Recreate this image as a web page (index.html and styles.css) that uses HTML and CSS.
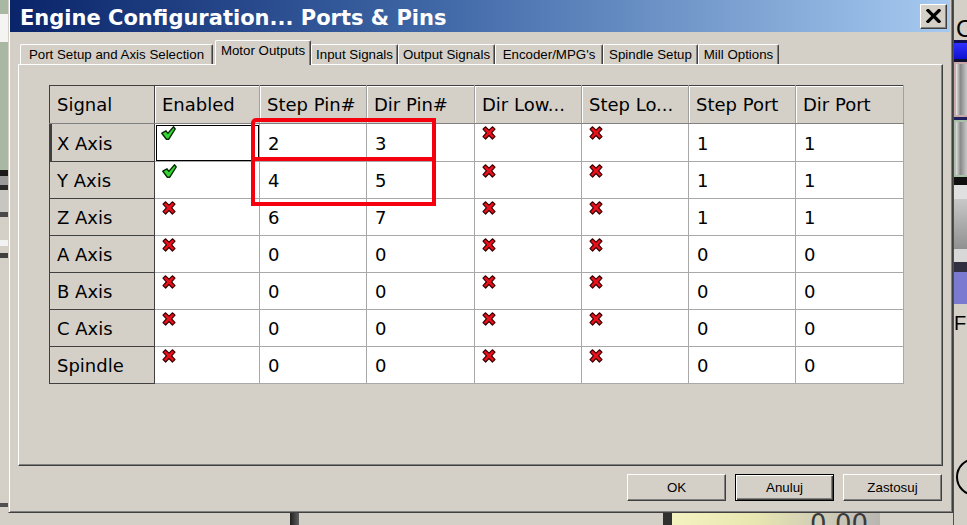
FILE: index.html
```html
<!DOCTYPE html>
<html>
<head>
<meta charset="utf-8">
<title>Engine Configuration... Ports &amp; Pins</title>
<link rel="stylesheet" href="styles.css">
</head>
<body>
<svg class="defs" width="0" height="0">
  <symbol id="chk" viewBox="0 0 15 14">
    <path d="M0.8 7.2 L5 4.8 L6.8 7.4 L12.6 0.8 L14.2 3 L7.8 13.2 L5.4 13.2 Z" fill="#33d633" stroke="#082808" stroke-width="1.4" stroke-linejoin="round"/>
  </symbol>
  <symbol id="crs" viewBox="0 0 14 14">
    <path d="M1 3.2 L3.6 0.8 L7 4.2 L10.4 0.8 L13 3.2 L9.6 6.8 L13 10.6 L10.4 13 L7 9.5 L3.6 13 L1 10.6 L4.4 6.8 Z" fill="#e8101c" stroke="#3a0000" stroke-width="1.2" stroke-linejoin="round"/>
  </symbol>
</svg>
<div class="desktop">
  <div class="left-strip">
    <div class="ls-a"></div>
    <div class="ls-b"></div>
    <div class="ls-c"></div>
    <div class="ls-d"></div>
    <div class="ls-e"></div>
    <div class="ls-f"></div>
    <div class="ls-g"></div>
    <div class="ls-h"></div>
    <div class="ls-i"></div>
    <div class="ls-j"></div>
    <div class="ls-k"></div>
    <div class="ls-l"></div>
    <div class="ls-m"></div>
    <div class="ls-n"></div>
    <div class="ls-o"></div>
  </div>
  <div class="center">
    <div class="dialog">
      <div class="titlebar">
        <span class="title">Engine Configuration... Ports &amp; Pins</span>
        <button class="close" aria-label="Close">
          <svg width="15" height="14" viewBox="0 0 15 14"><path d="M2 1.5 L13 12.5 M13 1.5 L2 12.5" stroke="#000" stroke-width="3.2" stroke-linecap="square"/></svg>
        </button>
      </div>
      <div class="body">
        <div class="tabs">
          <div class="tab t1">Port Setup and Axis Selection</div>
          <div class="tab t2 active">Motor Outputs</div>
          <div class="tab t3">Input Signals</div>
          <div class="tab t4">Output Signals</div>
          <div class="tab t5">Encoder/MPG's</div>
          <div class="tab t6">Spindle Setup</div>
          <div class="tab t7">Mill Options</div>
        </div>
        <div class="panel">
          <div class="table-wrap">
            <table class="grid">
              <colgroup>
                <col class="c-sig"><col class="c-en"><col class="c-sp"><col class="c-dp">
                <col class="c-dl"><col class="c-sl"><col class="c-spo"><col class="c-dpo">
              </colgroup>
              <thead>
                <tr>
                  <th class="first">Signal</th>
                  <th>Enabled</th>
                  <th>Step Pin#</th>
                  <th>Dir Pin#</th>
                  <th>Dir Low...</th>
                  <th>Step Lo...</th>
                  <th>Step Port</th>
                  <th>Dir Port</th>
                </tr>
              </thead>
              <tbody>
                <tr class="r-first">
                  <td class="lbl cur">X Axis</td>
                  <td class="ic focus"><svg class="i-chk"><use href="#chk"/></svg></td>
                  <td>2</td><td>3</td>
                  <td class="ic"><svg class="i-crs"><use href="#crs"/></svg></td>
                  <td class="ic"><svg class="i-crs"><use href="#crs"/></svg></td>
                  <td>1</td><td>1</td>
                </tr>
                <tr>
                  <td class="lbl">Y Axis</td>
                  <td class="ic"><svg class="i-chk"><use href="#chk"/></svg></td>
                  <td>4</td><td>5</td>
                  <td class="ic"><svg class="i-crs"><use href="#crs"/></svg></td>
                  <td class="ic"><svg class="i-crs"><use href="#crs"/></svg></td>
                  <td>1</td><td>1</td>
                </tr>
                <tr>
                  <td class="lbl">Z Axis</td>
                  <td class="ic"><svg class="i-crs"><use href="#crs"/></svg></td>
                  <td>6</td><td>7</td>
                  <td class="ic"><svg class="i-crs"><use href="#crs"/></svg></td>
                  <td class="ic"><svg class="i-crs"><use href="#crs"/></svg></td>
                  <td>1</td><td>1</td>
                </tr>
                <tr>
                  <td class="lbl">A Axis</td>
                  <td class="ic"><svg class="i-crs"><use href="#crs"/></svg></td>
                  <td>0</td><td>0</td>
                  <td class="ic"><svg class="i-crs"><use href="#crs"/></svg></td>
                  <td class="ic"><svg class="i-crs"><use href="#crs"/></svg></td>
                  <td>0</td><td>0</td>
                </tr>
                <tr>
                  <td class="lbl">B Axis</td>
                  <td class="ic"><svg class="i-crs"><use href="#crs"/></svg></td>
                  <td>0</td><td>0</td>
                  <td class="ic"><svg class="i-crs"><use href="#crs"/></svg></td>
                  <td class="ic"><svg class="i-crs"><use href="#crs"/></svg></td>
                  <td>0</td><td>0</td>
                </tr>
                <tr>
                  <td class="lbl">C Axis</td>
                  <td class="ic"><svg class="i-crs"><use href="#crs"/></svg></td>
                  <td>0</td><td>0</td>
                  <td class="ic"><svg class="i-crs"><use href="#crs"/></svg></td>
                  <td class="ic"><svg class="i-crs"><use href="#crs"/></svg></td>
                  <td>0</td><td>0</td>
                </tr>
                <tr>
                  <td class="lbl">Spindle</td>
                  <td class="ic"><svg class="i-crs"><use href="#crs"/></svg></td>
                  <td>0</td><td>0</td>
                  <td class="ic"><svg class="i-crs"><use href="#crs"/></svg></td>
                  <td class="ic"><svg class="i-crs"><use href="#crs"/></svg></td>
                  <td>0</td><td>0</td>
                </tr>
              </tbody>
            </table>
            <div class="annot box-a"></div>
            <div class="annot box-b"></div>
          </div>
        </div>
        <div class="buttons">
          <button class="btn">OK</button>
          <button class="btn default">Anuluj</button>
          <button class="btn">Zastosuj</button>
        </div>
      </div>
    </div>
    <div class="below">
      <div class="bl-gap1"></div>
      <div class="bl-dark"></div>
      <div class="bl-gap2"></div>
      <div class="bl-edge"></div>
      <div class="bl-bar"><span class="bl-num">0.00</span></div>
      <div class="bl-rest"></div>
    </div>
  </div>
  <div class="right-strip">
    <div class="rs-top"></div>
    <div class="rs-c">C</div>
    <div class="rs-navy"></div>
    <div class="rs-blue"></div>
    <div class="rs-navy2"></div>
    <div class="rs-btn1"></div>
    <div class="rs-navy3"></div>
    <div class="rs-btn2"></div>
    <div class="rs-black"></div>
    <div class="rs-light"></div>
    <div class="rs-btn3"></div>
    <div class="rs-light2"></div>
    <div class="rs-dark"></div>
    <div class="rs-purple"></div>
    <div class="rs-light3"></div>
    <div class="rs-ff">FF</div>
    <div class="rs-gray"></div>
    <div class="rs-circle"><span class="ring"></span></div>
    <div class="rs-bottom"></div>
  </div>
</div>
</body>
</html>
```

FILE: styles.css
```css
* { box-sizing: border-box; }
html, body { margin: 0; padding: 0; }
body {
  width: 967px;
  height: 525px;
  overflow: hidden;
  background: #d4d0c8;
  font-family: "Liberation Sans", Arial, sans-serif;
}
.defs { position: absolute; width: 0; height: 0; overflow: hidden; }

.desktop { display: flex; height: 525px; }

/* left background strip */
.left-strip { width: 8px; display: flex; flex-direction: column; }
.ls-a { height: 14px; background: #a9b8a3; }
.ls-b { height: 28px; background: #f4f4f2; }
.ls-c { height: 128px; background: #a9b8a3; }
.ls-d { height: 6px; background: #1a1a1a; }
.ls-e { height: 9px; background: #9a9a9a; }
.ls-f { height: 5px; background: #2a2a2a; }
.ls-g { height: 22px; background: #c8c6c0; }
.ls-h { height: 5px; background: #4a4a4a; }
.ls-i { height: 23px; background: #d4d0c8; }
.ls-j { height: 6px; background: #f2f2f2; }
.ls-k { height: 7px; background: #d4d0c8; }
.ls-l { height: 5px; background: #404040; }
.ls-m { height: 245px; background: #d4d0c8; }
.ls-n { height: 4px; background: #505050; }
.ls-o { flex: 1; background: #d4d0c8; }

.center { width: 945px; display: flex; flex-direction: column; }

/* dialog window */
.dialog {
  height: 513px;
  display: flex;
  flex-direction: column;
  background: #d4d0c8;
  border-left: 1px solid #d4d0c8;
  border-right: 1px solid #404040;
  border-bottom: 1px solid #404040;
  box-shadow: inset 1px 0 #ffffff, inset -1px -1px #808080;
  padding: 0 2px 2px 1px;
}
.titlebar {
  height: 32px;
  flex: none;
  display: flex;
  align-items: center;
  justify-content: space-between;
  background: linear-gradient(to right, #0a246a 0%, #3f67a6 45%, #a6caf0 100%);
  padding: 0 3px 0 10px;
}
.title {
  color: #ffffff;
  font-family: "DejaVu Sans", Verdana, sans-serif;
  font-weight: bold;
  font-size: 21px;
  line-height: 24px;
  white-space: nowrap;
  padding-top: 3px;
}
.close {
  width: 27px;
  height: 25px;
  padding: 0;
  margin: 0;
  background: #d4d0c8;
  border: 1px solid;
  border-color: #ffffff #404040 #404040 #ffffff;
  box-shadow: inset -1px -1px #808080;
  display: flex;
  align-items: center;
  justify-content: center;
}

.body {
  flex: 1;
  display: flex;
  flex-direction: column;
  padding: 0 7px 0 8px;
}

/* tabs */
.tabs {
  margin-top: 8px;
  height: 24px;
  display: flex;
  align-items: flex-end;
  padding-left: 2px;
  position: relative;
  z-index: 1;
}
.tab {
  height: 20px;
  font-size: 13.3px;
  line-height: 19px;
  color: #000;
  text-align: center;
  white-space: nowrap;
  background: #d4d0c8;
  border-top: 1px solid #ffffff;
  border-left: 1px solid #ffffff;
  border-right: 1px solid #404040;
  box-shadow: inset -1px 0 #808080;
  border-radius: 2px 2px 0 0;
}
.tab.active {
  height: 25px;
  margin-bottom: -1px;
  line-height: 20px;
}
.t1 { width: 193px; margin-right: 2px; }
.t2 { width: 96px; }
.t3 { width: 87px; }
.t4 { width: 97px; }
.t5 { width: 108px; }
.t6 { width: 95px; }
.t7 { width: 81px; }

/* tab panel */
.panel {
  height: 402px;
  flex: none;
  border-top: 1px solid #ffffff;
  border-left: 1px solid #ffffff;
  border-right: 1px solid #404040;
  border-bottom: 1px solid #404040;
  box-shadow: inset -1px -1px #808080;
  padding: 20px 0 0 30px;
}
.table-wrap { position: relative; width: 854px; }

.grid {
  border-collapse: collapse;
  table-layout: fixed;
  width: 854px;
  font-family: "DejaVu Sans", Verdana, sans-serif;
  font-size: 18px;
  color: #000;
  border-top: 1px solid #404040;
  border-left: 1px solid #404040;
}
.c-sig { width: 105px; }
.c-en { width: 105px; }
.c-sp { width: 107px; }
.c-dp { width: 108px; }
.c-dl { width: 107px; }
.c-sl { width: 107px; }
.c-spo { width: 107px; }
.c-dpo { width: 108px; }
.grid th {
  height: 38px;
  font-weight: normal;
  text-align: left;
  padding: 0 0 0 7px;
  background: #d4d0c8;
  border-right: 1px solid #a0a0a0;
  border-bottom: 1px solid #808080;
  box-shadow: inset 1px 1px #ffffff;
  white-space: nowrap;
  overflow: hidden;
}
.grid th.first {
  border-right: 1px solid #404040;
  box-shadow: none;
}
.grid td {
  height: 37px;
  padding: 1px 0 0 8px;
  background: #ffffff;
  border-right: 1px solid #a8a8a8;
  border-bottom: 1px solid #a8a8a8;
  vertical-align: middle;
}
.grid tr.r-first td { height: 38px; }
.grid td.lbl {
  background: #d4d0c8;
  padding-left: 7px;
  border-right: 1px solid #404040;
  border-bottom: 1px solid #404040;
}
.grid td.lbl.cur { box-shadow: inset 2px 0 #404040; }
.grid td.ic {
  vertical-align: top;
  padding: 2px 0 0 7px;
}
.grid td.focus {
  outline: 1px solid #000;
  outline-offset: -2px;
  padding-left: 6px;
}
.i-chk { width: 15px; height: 14px; display: block; }
.i-crs { width: 14px; height: 14px; display: block; }

/* red hand-drawn annotation */
.annot {
  position: absolute;
  border: 4px solid #f5000f;
}
.box-a {
  left: 202px;
  top: 33px;
  width: 185px;
  height: 43px;
  border-top-left-radius: 5px;
}
.box-b {
  left: 202px;
  top: 72px;
  width: 185px;
  height: 49px;
}

/* dialog buttons */
.buttons {
  margin-top: 8px;
  display: flex;
  justify-content: flex-end;
  gap: 9px;
  padding-right: 1px;
}
.btn {
  width: 99px;
  height: 27px;
  margin: 0;
  padding: 0;
  font-family: "Liberation Sans", Arial, sans-serif;
  font-size: 13.3px;
  color: #000;
  background: #d4d0c8;
  border: 1px solid;
  border-color: #ffffff #404040 #404040 #ffffff;
  box-shadow: inset -1px -1px #808080;
}
.btn.default {
  border: 1px solid #000;
  box-shadow: inset 1px 1px #ffffff, inset -1px -1px #404040, inset -2px -2px #808080;
}

/* strip under the dialog */
.below { flex: 1; display: flex; overflow: hidden; }
.bl-gap1 { width: 282px; }
.bl-dark { width: 9px; background: linear-gradient(to right, #202020, #606060); }
.bl-gap2 { width: 364px; }
.bl-edge { width: 9px; background: #303030; }
.bl-bar {
  width: 208px;
  overflow: hidden;
  background: linear-gradient(to right, #f4f2c0, #e8e6b0 40%, #c8c6b8 80%, #b8b6b0);
  text-align: right;
  padding-right: 12px;
}
.bl-num {
  display: block;
  font-family: "DejaVu Sans", Verdana, sans-serif;
  font-size: 26px;
  line-height: 26px;
  margin-top: -2px;
  color: #3a3a3a;
}
.bl-rest { flex: 1; }

/* right background strip */
.right-strip { flex: 1; display: flex; flex-direction: column; border-left: 1px solid #505050; overflow: hidden; }
.rs-top { height: 12px; background: #d4d0c8; }
.rs-c {
  height: 28px;
  font-family: "Liberation Sans", Arial, sans-serif;
  font-size: 24px;
  line-height: 34px;
  color: #000;
  padding-left: 2px;
  overflow: hidden;
  background: #d4d0c8;
}
.rs-navy { height: 3px; background: #101050; }
.rs-blue { height: 16px; background: linear-gradient(to bottom, #3030ff, #1010d0); }
.rs-navy2 { height: 3px; background: #101030; }
.rs-btn1 {
  height: 55px;
  background: linear-gradient(to right, #e8e8e8, #888 40%, #c8c8c8);
  border: 2px solid #c8a8a8;
  border-right: none;
}
.rs-navy3 { height: 3px; background: #202060; }
.rs-btn2 {
  height: 57px;
  background: linear-gradient(to right, #e0e0e0, #8a8a8a 40%, #c8c8c8);
  border: 2px solid #a8c0a8;
  border-right: none;
}
.rs-black { height: 8px; background: #101010; }
.rs-light { height: 14px; background: #e0e0e0; }
.rs-btn3 { height: 50px; background: linear-gradient(to bottom, #c8c8c8, #909090); }
.rs-light2 { height: 13px; background: #d8d8d8; }
.rs-dark { height: 10px; background: #303040; }
.rs-purple { height: 32px; background: #7a7ad0; }
.rs-light3 { height: 8px; background: #d4d0c8; }
.rs-ff {
  height: 24px;
  font-family: "Liberation Sans", Arial, sans-serif;
  font-size: 20px;
  line-height: 22px;
  color: #000;
  background: #d4d0c8;
  white-space: nowrap;
  overflow: hidden;
}
.rs-gray { height: 122px; background: #d4d0c8; }
.rs-circle { height: 40px; background: #d4d0c8; overflow: hidden; padding-left: 2px; }
.ring {
  display: block;
  width: 38px;
  height: 38px;
  border: 2px solid #000;
  border-radius: 50%;
}
.rs-bottom { flex: 1; background: #d4d0c8; }
```
